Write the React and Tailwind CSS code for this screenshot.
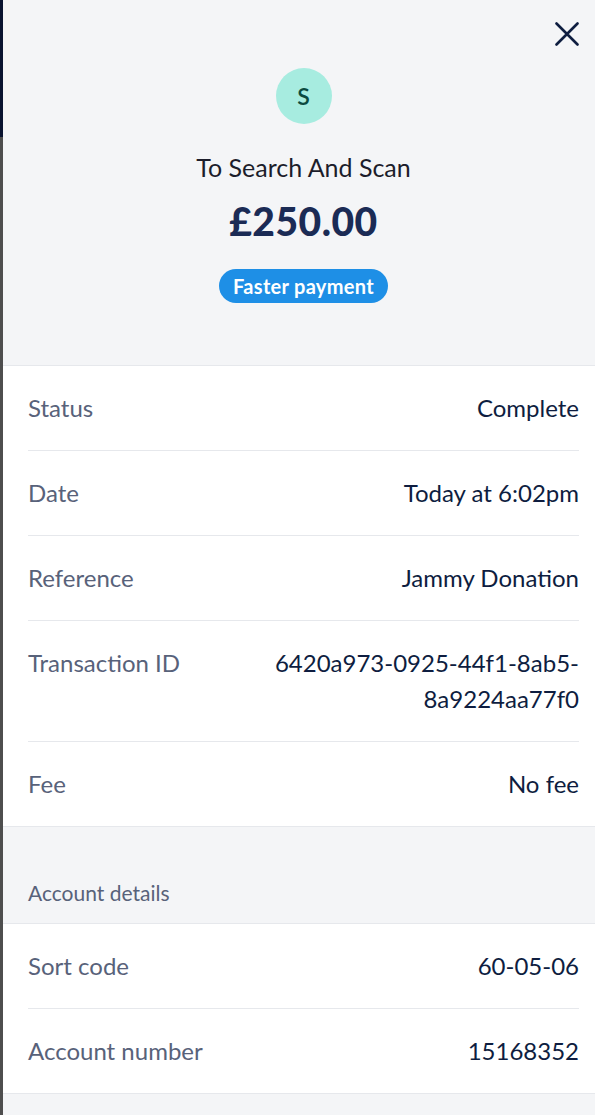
import React from 'react';

const rows = [
  { label: 'Status', value: 'Complete' },
  { label: 'Date', value: 'Today at 6:02pm' },
  { label: 'Reference', value: 'Jammy Donation' },
  { label: 'Transaction ID', value: '6420a973-0925-44f1-8ab5-8a9224aa77f0' },
  { label: 'Fee', value: 'No fee' },
];

const accountRows = [
  { label: 'Sort code', value: '60-05-06' },
  { label: 'Account number', value: '15168352' },
];

const Row = ({ label, value, last }) => (
  <div className={`flex items-start justify-between gap-6 py-[24px] text-[24px] leading-[36px] ${last ? '' : 'border-b border-[#e6e8ec]'}`}>
    <span className="text-[#58627a] shrink-0">{label}</span>
    <span className="text-[#0e1d40] text-right max-w-[330px]">{value}</span>
  </div>
);

export default function App() {
  return (
    <div className="flex min-h-screen w-[595px] font-['Lato',sans-serif]">
      <div className="flex w-[3px] flex-col">
        <div className="h-[137px] bg-[#0a1330]" />
        <div className="flex-1 bg-[#4e4e4e]" />
      </div>

      <div className="flex-1 bg-[#f4f5f7]">
        <div className="border-b border-[#e6e8ec] pl-[25px] pr-[16px] pt-[22px] pb-[62px]">
          <div className="flex justify-end">
            <button className="h-[24px] w-[24px] text-[#0e1d40]">
              <svg viewBox="0 0 24 24" width="24" height="24" fill="none" stroke="currentColor" strokeWidth="2.6" strokeLinecap="round">
                <path d="M1.5 1.5 L22.5 22.5 M22.5 1.5 L1.5 22.5" />
              </svg>
            </button>
          </div>
          <div className="mt-[22px] flex flex-col items-center">
            <div className="flex h-[56px] w-[56px] items-center justify-center rounded-full bg-[#a7ece0] text-[23px] font-semibold text-[#0b4a3f]">
              S
            </div>
            <p className="mt-[27px] text-[25px] leading-[32px] text-[#1c1d2b]">To Search And Scan</p>
            <p className="mt-[18px] text-[39px] font-black leading-[40px] tracking-[0.5px] text-[#1b2b55]">£250.00</p>
            <span className="mt-[28px] flex h-[34px] items-center rounded-full bg-[#1e8fe6] px-[14px] text-[20px] font-bold tracking-[0.3px] text-white">
              Faster payment
            </span>
          </div>
        </div>

        <div className="border-b border-[#e6e8ec] bg-white pl-[25px] pr-[16px]">
          {rows.map((r, i) => (
            <Row key={r.label} {...r} last={i === rows.length - 1} />
          ))}
        </div>

        <div className="border-b border-[#e6e8ec] pl-[25px] pr-[16px] pt-[52px] pb-[16px] text-[21px] leading-[28px] text-[#58627a]">
          Account details
        </div>

        <div className="border-b border-[#e6e8ec] bg-white pl-[25px] pr-[16px]">
          {accountRows.map((r, i) => (
            <Row key={r.label} {...r} last={i === accountRows.length - 1} />
          ))}
        </div>
      </div>
    </div>
  );
}
